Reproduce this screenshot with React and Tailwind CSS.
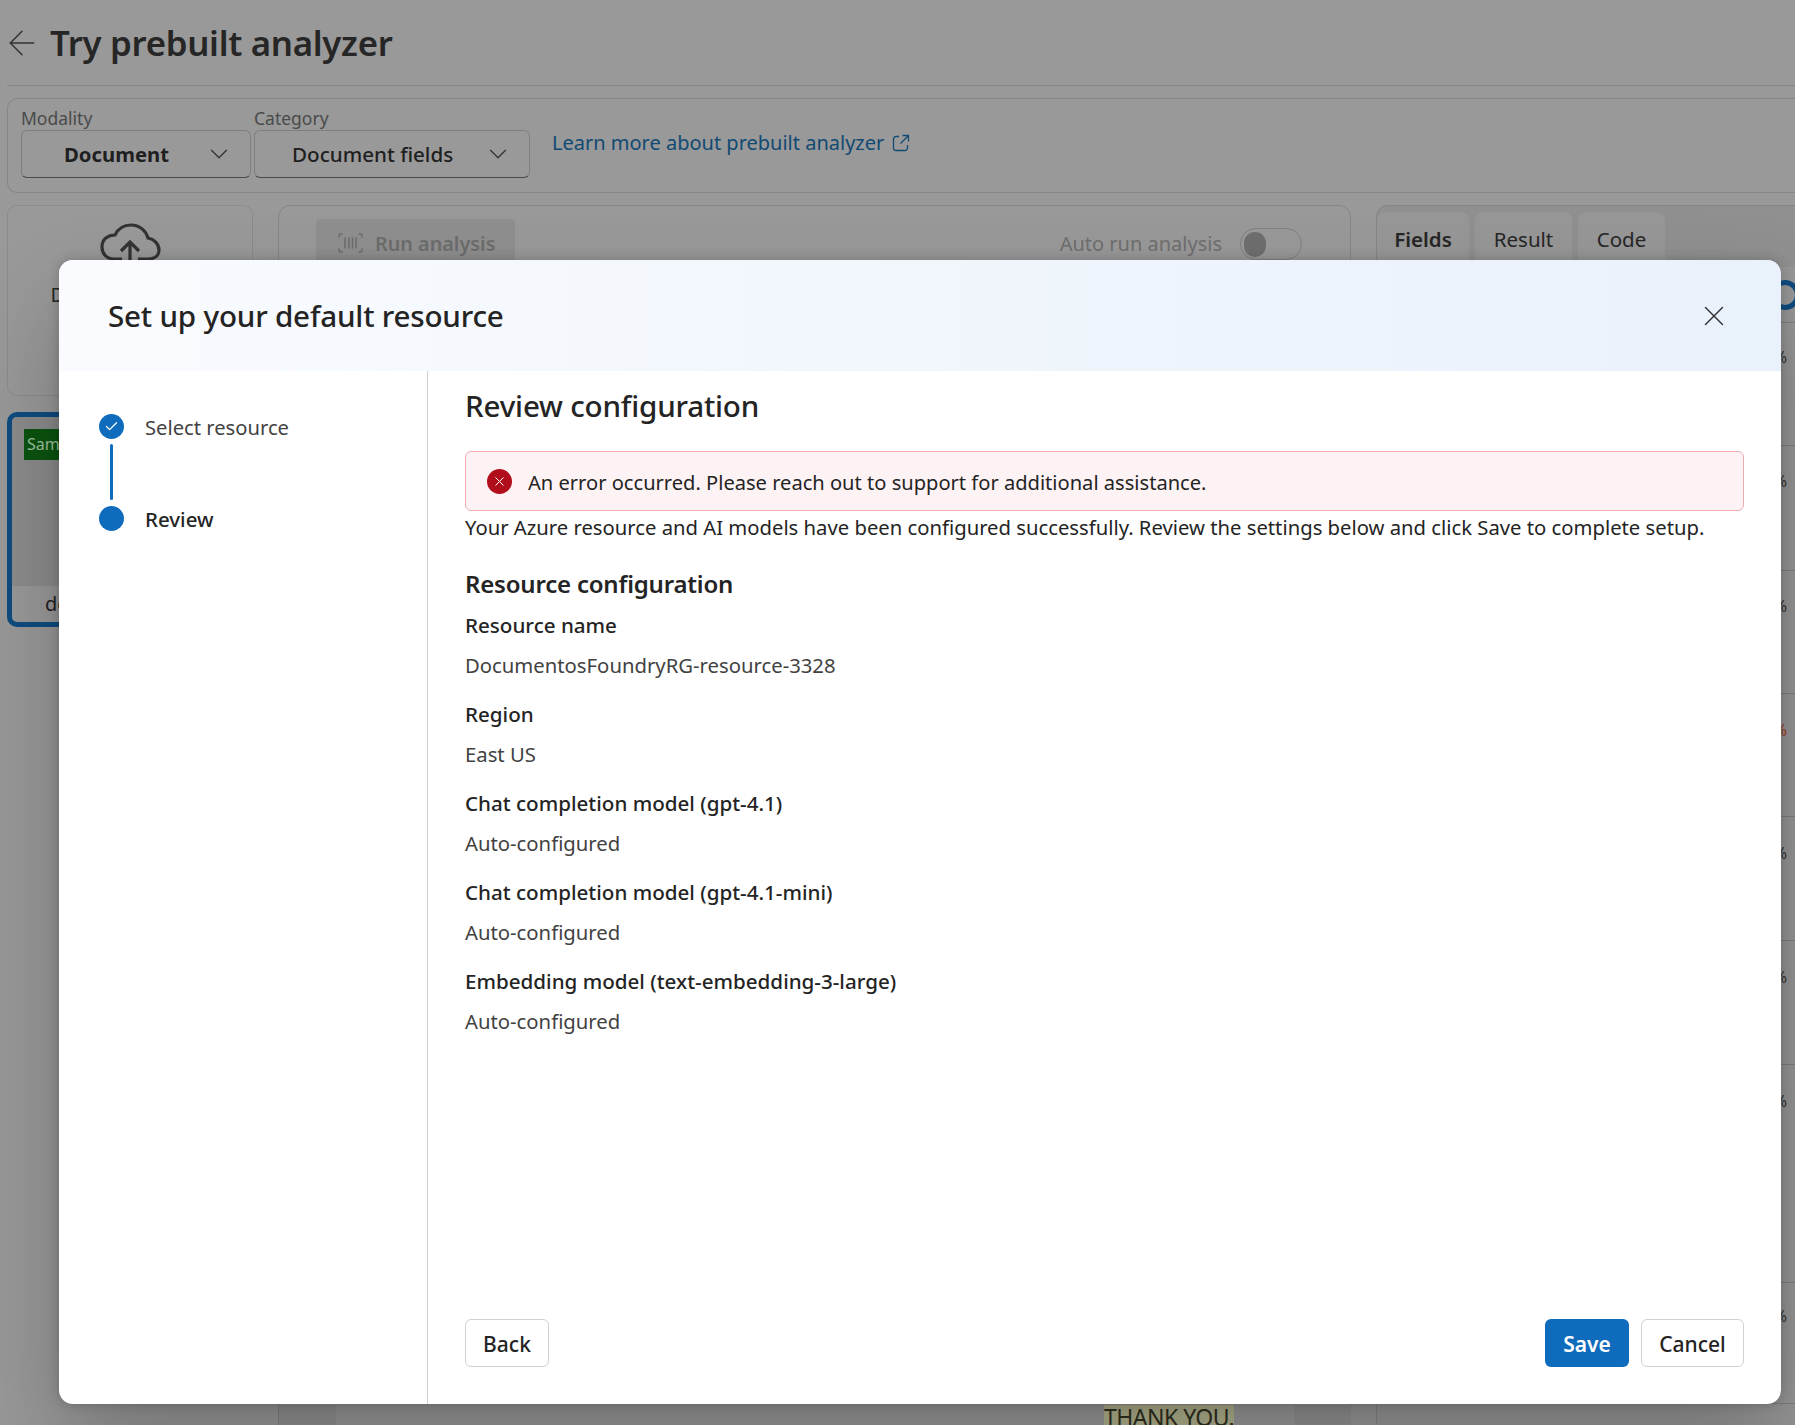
import React from 'react';
import { ChevronDown, Check, X, ArrowLeft } from 'lucide-react';

const fields = [
  { label: 'Resource name', value: 'DocumentosFoundryRG-resource-3328' },
  { label: 'Region', value: 'East US' },
  { label: 'Chat completion model (gpt-4.1)', value: 'Auto-configured' },
  { label: 'Chat completion model (gpt-4.1-mini)', value: 'Auto-configured' },
  { label: 'Embedding model (text-embedding-3-large)', value: 'Auto-configured' },
];

const rows = [
  { h: 123, top: 24, red: false },
  { h: 125, top: 25, red: false },
  { h: 123, top: 25, red: false },
  { h: 123, top: 26, red: true },
  { h: 124, top: 26, red: false },
  { h: 124, top: 26, red: false },
  { h: 218, top: 26, red: false },
  { h: 121, top: 23, red: false },
];

const CloudIcon = () => (
  <svg width="64" height="44" viewBox="0 0 64 44" fill="none" stroke="#333333" strokeWidth="3.2">
    <path d="M24 36H16C8 36 4 30 4 24C4 16 10 12 17 12C20 6 26 2 33 2C42 2 48 8 50 15C56 16 61 21 61 27C61 33 56 36 50 36H40" />
    <path d="M32 20V44M23 28L32 19L41 28" />
  </svg>
);

const BarcodeIcon = () => (
  <svg width="25" height="20" viewBox="0 0 25 20" fill="none" stroke="#6d6d6d" strokeWidth="1.5" strokeLinecap="round">
    <path d="M4 1H2.500A1.500 1.500 0 0 0 1 2.500V4M1 16v1.500A1.500 1.500 0 0 0 2.500 19H4" />
    <path d="M21 1h1.500A1.500 1.500 0 0 1 24 2.500V4M24 16v1.500A1.500 1.500 0 0 1 22.500 19H21" />
    <path d="M7 5v10M11 5v10M14.500 5v10M18 5v10" />
  </svg>
);

const LinkOutIcon = () => (
  <svg width="18" height="18" viewBox="0 0 18 18" fill="none" stroke="#114a73" strokeWidth="1.3">
    <path d="M7 2.500H4A2.500 2.500 0 0 0 1.500 5v9A2.500 2.500 0 0 0 4 16.500h9a2.500 2.500 0 0 0 2.500-2.500v-3" />
    <path d="M10.500 1.500h6v6M16.500 1.500L8.500 9.500" />
  </svg>
);

const Dropdown = ({ text, bold, className }) => (
  <div className={`h-[48px] flex items-center justify-between rounded-[6px] border border-[#7f7f7f] border-b-[#4a4a4a] text-[#1f1f1f] ${bold ? 'text-[20.3px] font-bold' : 'text-[20.6px] font-medium'} ${className}`}>
    <span>{text}</span>
    <ChevronDown size={30} strokeWidth={1} className="text-[#333333]" />
  </div>
);

export default function App() {
  return (
    <div className="relative w-[1795px] h-[1425px] overflow-hidden bg-[#999999] font-['Noto_Sans',sans-serif]">
      {/* page behind the dialog */}
      <div className="h-[86px] ml-[7px] border-b border-[#868686] flex items-center">
        <ArrowLeft size={40} strokeWidth={0.9} className="text-[#333333] shrink-0 -ml-[5px]" />
        <h1 className="ml-[8px] pt-[2px] text-[34.8px] font-semibold text-[#262626] tracking-[-0.3px]">Try prebuilt analyzer</h1>
      </div>

      <div className="ml-[7px] mt-[12px] h-[95px] border border-r-0 border-[#868686] rounded-l-[10px] flex pl-[13px]">
        <div className="w-[233px]">
          <div className="h-[31px] pt-[6px] text-[17.5px] leading-[26px] text-[#4a4a4a]">Modality</div>
          <Dropdown text="Document" bold className="w-[230px] pl-[42px] pr-[16px]" />
        </div>
        <div className="w-[276px]">
          <div className="h-[31px] pt-[6px] text-[17.5px] leading-[26px] text-[#4a4a4a]">Category</div>
          <Dropdown text="Document fields" className="w-[276px] pl-[37px] pr-[16px]" />
        </div>
        <div className="ml-[22px] h-[88px] flex items-center gap-[8px] text-[#114a73] text-[20px]">
          <span>Learn more about prebuilt analyzer</span>
          <LinkOutIcon />
        </div>
      </div>

      <div className="mt-[12px] ml-[7px] flex">
        <div className="w-[246px] shrink-0">
          <div className="h-[191px] border border-dotted border-[#7f7f7f] rounded-[10px] flex flex-col items-center pt-[17px]">
            <CloudIcon />
            <div className="mt-[14px] text-[20px] leading-[27px] text-[#262626]">Drag &amp; drop files</div>
          </div>
          <div className="mt-[16px] h-[215px] border-[5px] border-[#0f4c81] rounded-[10px] flex flex-col overflow-hidden">
            <div className="h-[169px] bg-[#8c8c8c] pt-[12px] pl-[12px]">
              <div className="w-[60px] h-[31px] bg-[#0b5410] text-[#9fc49f] text-[16px] leading-[31px] pl-[3px] overflow-hidden">Sample</div>
            </div>
            <div className="flex-1 pl-[33px] pt-[3px] text-[20px] text-[#222222]">doc</div>
          </div>
        </div>

        <div className="ml-[25px] w-[1073px] shrink-0 h-[1250px] border border-[#868686] rounded-t-[12px] pt-[13px] pl-[37px] pr-[48px]">
          <div className="flex items-start justify-between">
            <div className="w-[199px] h-[48px] rounded-[4px] bg-[#8f8f8f] flex items-center pl-[22px] gap-[12px] text-[19.8px] font-semibold text-[#6d6d6d]">
              <BarcodeIcon />
              <span className="pt-[2px]">Run analysis</span>
            </div>
            <div className="flex items-center gap-[18px] h-[48px] pt-[2px] text-[20px] text-[#6f6f6f]">
              <span>Auto run analysis</span>
              <div className="w-[62px] h-[32px] rounded-full border border-[#808080] flex items-center pl-[3px]">
                <div className="w-[22px] h-[25px] rounded-full bg-[#6f6f6f]" />
              </div>
            </div>
          </div>
        </div>

        <div className="ml-[25px] flex-1 h-[1250px] border border-r-0 border-[#868686] rounded-tl-[12px] bg-[#909090] overflow-hidden">
          <div className="flex gap-[6px] pt-[6px] h-[61px] text-[20.5px] text-[#262626]">
            <div className="w-[92px] bg-[#979797] rounded-t-[8px] flex justify-center items-center font-semibold">Fields</div>
            <div className="w-[97px] bg-[#979797] rounded-t-[8px] flex justify-center items-center">Result</div>
            <div className="w-[87px] bg-[#979797] rounded-t-[8px] flex justify-center items-center">Code</div>
          </div>
          <div className="bg-[#979797] h-[1188px]">
            <div className="h-[56px] border-b border-[#7f7f7f] flex justify-end items-center">
              <div className="w-[30px] h-[30px] -mr-[5px] rounded-full border-[5px] border-[#0f4c81]" />
            </div>
            {rows.map((row, i) => (
              <div
                key={i}
                style={{ height: row.h, paddingTop: row.top }}
                className={`border-b border-[#7f7f7f] flex justify-end items-start pr-[8px] text-[16px] leading-[20px] ${row.red ? 'text-[#a33a20]' : 'text-[#333333]'}`}
              >
                %
              </div>
            ))}
          </div>
        </div>
      </div>

      <div className="absolute left-[279px] top-[1405px] w-[57px] h-[20px] bg-[#929292]" />
      <div className="absolute left-[1294px] top-[1405px] w-[57px] h-[20px] bg-[#929292]" />
      <div className="absolute left-[1104px] top-[1405px] h-[24px] bg-[#b2b28e] text-[#2f2f1f] text-[23px] leading-[24px] tracking-[-0.5px]">THANK YOU.</div>

      {/* dialog */}
      <div className="absolute left-[59px] top-[260px] w-[1722px] h-[1144px] rounded-[14px] bg-white overflow-hidden flex flex-col shadow-[0_48px_96px_rgba(0,0,0,0.24),0_0_12px_rgba(0,0,0,0.2)]">
        <div className="h-[111px] shrink-0 bg-gradient-to-r from-[#f9fbfe] to-[#e9f1fb] flex items-center justify-between pl-[49px] pr-[50px]">
          <h2 className="pt-[2px] text-[29.6px] font-medium text-[#242424] tracking-[-0.2px]">Set up your default resource</h2>
          <X size={34} strokeWidth={1} className="text-[#333333]" />
        </div>

        <div className="flex flex-1 min-h-0">
          <div className="w-[369px] shrink-0 border-r border-[#cfcfcf] pl-[40px] pt-[43px]">
            <div className="flex items-start gap-[21px]">
              <div className="flex flex-col items-center">
                <div className="w-[25px] h-[25px] rounded-full bg-[#0f6cbd] flex items-center justify-center">
                  <Check size={15} strokeWidth={2} className="text-white" />
                </div>
                <div className="w-[3px] h-[56px] mt-[5px] mb-[6px] rounded-full bg-[#0f6cbd]" />
              </div>
              <span className="text-[20.2px] leading-[27px] text-[#424242]">Select resource</span>
            </div>
            <div className="flex items-start gap-[21px]">
              <div className="w-[25px] h-[25px] rounded-full bg-[#0f6cbd]" />
              <span className="text-[20.5px] leading-[27px] font-medium text-[#242424]">Review</span>
            </div>
          </div>

          <div className="flex-1 flex flex-col pl-[37px] pr-[37px] pb-[37px]">
            <h3 className="mt-[15px] text-[29.6px] leading-[40px] font-medium text-[#242424] tracking-[-0.2px]">Review configuration</h3>

            <div className="mt-[25px] h-[60px] rounded-[6px] border border-[#eeacb2] bg-[#fdf3f4] flex items-center pl-[21px] gap-[16px]">
              <div className="w-[25px] h-[25px] rounded-full bg-[#b10e1c] flex items-center justify-center">
                <X size={15} strokeWidth={1.6} className="text-white" />
              </div>
              <span className="pt-[4px] text-[20.1px] text-[#242424]">An error occurred. Please reach out to support for additional assistance.</span>
            </div>

            <p className="mt-[3px] text-[20.25px] leading-[27px] text-[#242424]">Your Azure resource and AI models have been configured successfully. Review the settings below and click Save to complete setup.</p>

            <h4 className="mt-[27px] text-[24px] leading-[32px] font-semibold text-[#242424] tracking-[-0.2px]">Resource configuration</h4>

            <div className="mt-[12px] flex flex-col gap-[22px]">
              {fields.map((f) => (
                <div key={f.label} className="flex flex-col gap-[13px]">
                  <div className="text-[20.6px] leading-[27px] font-medium text-[#242424]">{f.label}</div>
                  <div className="text-[20.3px] leading-[27px] text-[#424242]">{f.value}</div>
                </div>
              ))}
            </div>

            <div className="mt-auto flex justify-between">
              <button className="w-[84px] h-[48px] pt-[3px] rounded-[6px] border border-[#d1d1d1] bg-white text-[21px] font-medium text-[#242424]">Back</button>
              <div className="flex gap-[12px]">
                <button className="w-[84px] h-[48px] pt-[3px] rounded-[6px] bg-[#0f6cbd] text-[21px] font-semibold text-white">Save</button>
                <button className="w-[103px] h-[48px] pt-[3px] rounded-[6px] border border-[#d1d1d1] bg-white text-[21px] font-medium text-[#242424]">Cancel</button>
              </div>
            </div>
          </div>
        </div>
      </div>
    </div>
  );
}
